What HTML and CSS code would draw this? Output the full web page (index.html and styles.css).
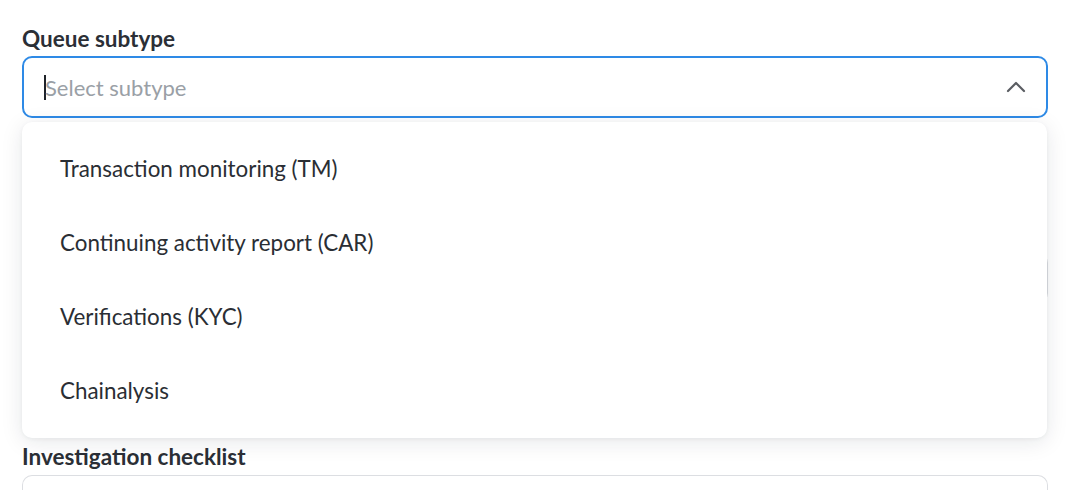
FILE: index.html
```html
<!DOCTYPE html>
<html>
<head>
<meta charset="utf-8">
<link rel="stylesheet" href="styles.css">
</head>
<body>
<div class="form">
  <div class="field field-first">
    <div class="label">Queue subtype</div>
    <div class="select-wrap">
      <div class="select">
        <span class="caret"></span><span class="placeholder">Select subtype</span>
        <svg class="chevron" width="20" height="12" viewBox="0 0 20 12"><path d="M2 10 L10 2 L18 10" fill="none" stroke="#5a5d62" stroke-width="2.2" stroke-linecap="round" stroke-linejoin="round"/></svg>
      </div>
      <ul class="menu">
        <li class="item">Transaction monitoring (TM)</li>
        <li class="item">Continuing activity report (CAR)</li>
        <li class="item">Verifications (KYC)</li>
        <li class="item">Chainalysis</li>
      </ul>
    </div>
  </div>
  <div class="field field-hidden">
    <div class="box small"></div>
  </div>
  <div class="field field-last">
    <div class="label">Investigation checklist</div>
    <div class="box open"></div>
  </div>
</div>
</body>
</html>
```
FILE: styles.css
```css
* { box-sizing: border-box; }
html, body { margin: 0; padding: 0; background: #fff; }
html { overflow: hidden; }
body {
  font-family: Lato, "Open Sans", sans-serif;
  color: #2b2f36;
  width: 1074px;
  height: 490px;
  overflow: hidden;
}
.form {
  padding: 26px 26px 0 22px;
  display: flex;
  flex-direction: column;
}
.label {
  font-weight: 700;
  font-size: 22.5px;
  line-height: 26px;
  color: #2b2f36;
}
.field-first .label { margin-bottom: 4px; }
.select-wrap { position: relative; }
.select {
  height: 62px;
  border: 2px solid #2e8ae6;
  border-radius: 10px;
  display: flex;
  align-items: center;
  padding-left: 20px;
  padding-right: 20px;
  position: relative;
}
.caret {
  width: 2px;
  height: 25px;
  background: #1f2329;
  margin-right: -1px;
}
.placeholder {
  font-size: 22px;
  color: #9aa0a6;
  flex: 1;
}
.menu {
  position: absolute;
  left: 0;
  right: 1px;
  top: 66px;
  height: 316px;
  margin: 0;
  padding: 9px 0 11px;
  list-style: none;
  background: #fff;
  border-radius: 10px;
  box-shadow: 0 4px 22px rgba(20, 30, 45, 0.10), 0 1px 4px rgba(20, 30, 45, 0.05);
  z-index: 5;
}
.item {
  height: 74px;
  display: flex;
  align-items: center;
  padding-left: 38px;
  font-size: 22.4px;
  color: #2a2e34;
}
.field-hidden { margin-top: 135px; }
.box {
  border: 1px solid #dcdee2;
  border-radius: 10px;
}
.box.small { height: 50px; }
.field-last { margin-top: 141px; }
.field-last .label { margin-bottom: 5px; }
.box.open {
  height: 15px;
  border-bottom: none;
  border-radius: 10px 10px 0 0;
}
```
